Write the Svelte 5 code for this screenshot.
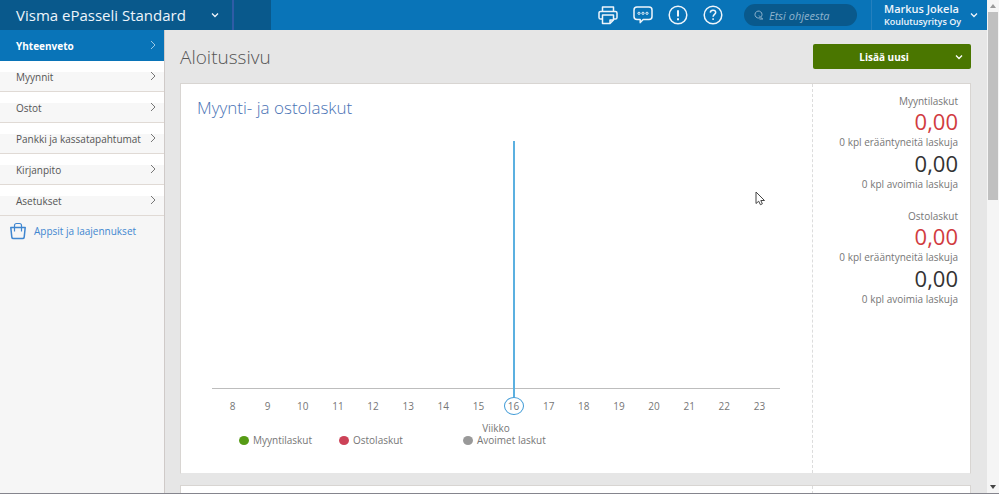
<script>
  let company = $state('Visma ePasseli Standard');
  let search = $state('');

  const menu = ['Yhteenveto', 'Myynnit', 'Ostot', 'Pankki ja kassatapahtumat', 'Kirjanpito', 'Asetukset'];
  let active = $state('Yhteenveto');

  const weeks = Array.from({ length: 16 }, (_, i) => i + 8);
  const currentWeek = 16;

  const legend = [
    { label: 'Myyntilaskut', color: 'green' },
    { label: 'Ostolaskut', color: 'red' },
    { label: 'Avoimet laskut', color: 'grey' }
  ];

  const totals = [
    { title: 'Myyntilaskut', overdue: '0,00', overdueCount: 0, open: '0,00', openCount: 0 },
    { title: 'Ostolaskut', overdue: '0,00', overdueCount: 0, open: '0,00', openCount: 0 }
  ];
</script>

<div class="window">
  <div class="page">
    <header class="topbar">
      <button type="button" class="brand">
        <span>{company}</span>
        <svg class="chevron" viewBox="0 0 8 6"><path d="M1 1.5l3 3 3-3"></path></svg>
      </button>
      <div class="brand-end"></div>
      <div class="tools">
        <button type="button" class="tool" aria-label="Tulosta">
          <svg viewBox="0 0 20 20">
            <path d="M4.5 6.3V2h11v4.3M4.500 14H2.600C1.700 14 1 13.300 1 12.400V8c0-.9.7-1.600 1.600-1.600h14.800c.9 0 1.600.7 1.600 1.600v4.400c0 .9-.7 1.600-1.600 1.600h-1.900"></path>
            <path d="M4.500 10h11v5L12 18.500H4.500zM15.500 15H12v3.500"></path>
          </svg>
        </button>
        <button type="button" class="tool" aria-label="Viestit">
          <svg viewBox="0 0 20 20">
            <path d="M4 2h12c1.700 0 3 1.300 3 3v6.400c0 1.700-1.300 3-3 3h-5.800L7.200 17.600v-3.200H4c-1.700 0-3-1.300-3-3V5c0-1.700 1.300-3 3-3z"></path>
            <g class="thin"><circle cx="6" cy="8.300" r="1.100"></circle><circle cx="10" cy="8.300" r="1.100"></circle><circle cx="14" cy="8.300" r="1.100"></circle></g>
          </svg>
        </button>
        <button type="button" class="tool" aria-label="Ilmoitukset">
          <svg viewBox="0 0 20 20">
            <circle cx="10" cy="10" r="8.800"></circle>
            <path class="thick" d="M10 5.200v6.200M10 13.300v1.900"></path>
          </svg>
        </button>
        <button type="button" class="tool" aria-label="Ohje">
          <svg viewBox="0 0 20 20">
            <circle cx="10" cy="10" r="8.800"></circle>
            <path d="M7.300 7.600c.1-1.500 1.200-2.300 2.700-2.300s2.700.9 2.700 2.200c0 1.900-2.600 2-2.600 4.200M10.100 13.200v1.800"></path>
          </svg>
        </button>
      </div>
      <label class="search">
        <svg viewBox="0 0 10 10"><path d="M6.200 7.600A3.500 3.500 0 1 1 8 4.500c0 1-.4 1.800-1 2.400M5 5.500L8.500 9M5.500 9H9"></path></svg>
        <input type="text" placeholder="Etsi ohjeesta" aria-label="Etsi ohjeesta" bind:value={search} />
      </label>
      <button type="button" class="user">
        <span class="user-text">
          <span class="user-name">Markus Jokela</span>
          <span class="user-company">Koulutusyritys Oy</span>
        </span>
        <svg class="chevron" viewBox="0 0 8 6"><path d="M1 1.500l3 3 3-3"></path></svg>
      </button>
    </header>

    <div class="body">
      <nav class="sidebar">
        {#each menu as item}
          <a href="#{item}" class="nav-item" class:active={item === active} onclick={() => (active = item)}>
            <span>{item}</span>
            <svg viewBox="0 0 6 10"><path d="M1 1l4 4-4 4"></path></svg>
          </a>
        {/each}
        <a href="#apps" class="apps">
          <svg viewBox="0 0 16 18">
            <path d="M.8 5.500h14.400l-1 9.600c-.1.900-.7 1.500-1.600 1.500H3.400c-.9 0-1.500-.6-1.600-1.500z"></path>
            <path class="handle" d="M4.500 9.500V3.500c0-1.200.8-2 2-2h3c1.200 0 2 .8 2 2v6"></path>
          </svg>
          <span>Appsit ja laajennukset</span>
        </a>
      </nav>

      <main class="content">
        <div class="title-row">
          <h1>Aloitussivu</h1>
          <button type="button" class="add">
            <span>Lisää uusi</span>
            <svg class="chevron" viewBox="0 0 8 6"><path d="M1 1.500l3 3 3-3"></path></svg>
          </button>
        </div>

        <section class="card">
          <div class="chart">
            <h2>Myynti- ja ostolaskut</h2>
            <div class="plot">
              {#each weeks as week}
                <div class="slot" class:current={week === currentWeek}></div>
              {/each}
            </div>
            <div class="weeks">
              {#each weeks as week}
                <span class:current={week === currentWeek}>{week}</span>
              {/each}
            </div>
            <div class="axis-title">Viikko</div>
            <ul class="legend">
              {#each legend as entry}
                <li><i class="dot {entry.color}"></i>{entry.label}</li>
              {/each}
            </ul>
          </div>
          <aside class="totals">
            {#each totals as total}
              <div class="total">
                <h3>{total.title}</h3>
                <strong class="overdue">{total.overdue}</strong>
                <p>{total.overdueCount} kpl erääntyneitä laskuja</p>
                <strong>{total.open}</strong>
                <p>{total.openCount} kpl avoimia laskuja</p>
              </div>
            {/each}
          </aside>
          <svg class="pointer" viewBox="0 0 10 15">
            <path d="M1 1v11.500l2.700-2.300 1.700 3.500 2-.9-1.600-3.300H9.500z"></path>
          </svg>
        </section>

        <section class="card">
          <div class="chart"></div>
          <aside class="totals"></aside>
        </section>
      </main>
    </div>
  </div>

  <div class="scrollbar">
    <svg viewBox="0 0 8 4"><path d="M4 0l3 4H1z"></path></svg>
    <div class="thumb"></div>
    <svg class="down" viewBox="0 0 8 4"><path d="M1 0h6L4 4z"></path></svg>
  </div>
</div>

<style>
  :global(body) {
    overflow: hidden;
    font-family: "Open Sans", "Noto Sans", sans-serif;
    font-size: 10px;
    color: #767676;
  }

  svg {
    fill: none;
    stroke: currentColor;
    flex-shrink: 0;
  }

  button {
    font: inherit;
    border: none;
    padding: 0;
    background: none;
    color: inherit;
    cursor: pointer;
  }

  a {
    text-decoration: none;
  }

  h1, h2, h3, p, ul {
    margin: 0;
    padding: 0;
    font-weight: 400;
  }

  .window {
    box-sizing: border-box;
    height: 100vh;
    display: flex;
    overflow: hidden;
    background: #e6e6e6;
    border-bottom: 1px solid #85858d;
  }

  .page {
    flex: 1;
    min-width: 0;
    display: flex;
    flex-direction: column;
  }

  .topbar {
    height: 30px;
    flex-shrink: 0;
    display: flex;
    align-items: stretch;
    background: #0974b8;
    color: #eef5fb;
  }

  .chevron {
    width: 8px;
    height: 6px;
    stroke-width: 1.3;
  }

  .brand {
    box-sizing: border-box;
    width: 234px;
    display: flex;
    align-items: center;
    justify-content: space-between;
    padding: 0 13px 0 16px;
    background: #09598c;
    border-right: 2px solid #2f5ca6;
    font-size: 15px;
    white-space: nowrap;
  }

  .brand-end {
    width: 37px;
    background: #09598c;
  }

  .tools {
    display: flex;
    align-items: center;
    gap: 15px;
    margin-left: auto;
    margin-right: 21px;
  }

  .tool {
    display: flex;
  }

  .tool svg {
    width: 20px;
    height: 20px;
    stroke-width: 1.5;
    stroke-linejoin: round;
  }

  .tool .thin {
    stroke-width: 1;
  }

  .tool .thick {
    stroke-width: 2;
  }

  .search {
    box-sizing: border-box;
    width: 113px;
    height: 22px;
    margin: 4px 14px 0 0;
    padding: 0 10px;
    display: flex;
    align-items: center;
    gap: 5px;
    border-radius: 11px;
    background: #09598c;
    color: #8fb3cd;
  }

  .search svg {
    width: 10px;
    height: 10px;
  }

  .search input {
    flex: 1;
    min-width: 0;
    padding: 0;
    border: none;
    outline: none;
    background: none;
    color: #fff;
    font: italic 11px "Open Sans", sans-serif;
  }

  .search input::placeholder {
    color: #8fb3cd;
    opacity: 1;
  }

  .user {
    box-sizing: border-box;
    width: 116px;
    display: flex;
    align-items: center;
    justify-content: space-between;
    padding: 0 9px 0 12px;
    border-left: 1px solid #2480be;
    text-align: left;
    white-space: nowrap;
  }

  .user-text {
    display: flex;
    flex-direction: column;
    line-height: 13px;
  }

  .user-name {
    font-size: 11px;
    font-weight: 600;
  }

  .user-company {
    font-size: 9px;
    font-weight: 600;
  }

  .body {
    flex: 1;
    min-height: 0;
    display: flex;
  }

  .sidebar {
    width: 164px;
    flex-shrink: 0;
    background: #f6f6f6;
    border-right: 1px solid #cfcac8;
  }

  .nav-item {
    box-sizing: border-box;
    height: 31px;
    display: flex;
    align-items: center;
    justify-content: space-between;
    padding: 2px 8px 0 16px;
    background: linear-gradient(#fff 11px, #f7f7f7 11px);
    border-bottom: 1px solid #e0dad5;
    color: #555;
    white-space: nowrap;
  }

  .nav-item svg {
    width: 6px;
    height: 10px;
    margin-bottom: 2px;
    color: #777;
  }

  .nav-item.active {
    background: #0974b8;
    border-color: #0974b8;
    color: #fff;
    font-weight: 700;
  }

  .nav-item.active svg {
    color: #9cc7e3;
  }

  .apps {
    display: flex;
    align-items: center;
    gap: 8px;
    padding: 6px 10px;
    color: #3f86d0;
  }

  .apps svg {
    width: 16px;
    height: 18px;
    stroke-width: 1.5;
    stroke-linejoin: round;
  }

  .apps .handle {
    stroke-width: 1.2;
  }

  .content {
    flex: 1;
    min-width: 0;
    padding: 0 16px 0 15px;
    overflow: hidden;
  }

  .title-row {
    height: 53px;
    display: flex;
    align-items: center;
    justify-content: space-between;
  }

  h1 {
    font-size: 19px;
    font-weight: 300;
    color: #555;
  }

  .add {
    box-sizing: border-box;
    width: 158px;
    height: 25px;
    display: flex;
    align-items: center;
    padding: 0 8px 0 0;
    border-radius: 2px;
    background: #4a7600;
    color: #fff;
    font-weight: 700;
  }

  .add span {
    flex: 1;
  }

  .card {
    position: relative;
    display: flex;
    min-height: 389px;
    margin-bottom: 11px;
    background: #fff;
    border: 1px solid #d8d5d2;
    border-bottom-color: #e6e6e6;
  }

  .chart {
    flex: 1;
    min-width: 0;
    padding: 12px 32px 0 31px;
  }

  h2 {
    margin-left: -15px;
    font-size: 17px;
    line-height: 24px;
    font-weight: 300;
    color: #4a73b5;
  }

  .plot,
  .weeks {
    display: grid;
    grid-template-columns: repeat(16, 1fr);
    padding: 0 3px;
  }

  .plot {
    height: 247px;
    margin-top: 21px;
    border-bottom: 1px solid #bdbdbd;
  }

  .slot.current {
    position: relative;
  }

  .slot.current::before {
    content: '';
    position: absolute;
    top: 0;
    bottom: -9px;
    left: 50%;
    width: 2px;
    margin-left: -1px;
    background: #5bb0e0;
  }

  .weeks {
    margin-top: 8px;
    justify-items: center;
  }

  .weeks span {
    box-sizing: border-box;
    width: 20px;
    height: 18px;
    line-height: 18px;
    text-align: center;
  }

  .weeks .current {
    line-height: 16px;
    border: 1px solid #3f9ad6;
    border-radius: 50%;
  }

  .axis-title {
    margin-top: 7px;
    line-height: 12px;
    text-align: center;
  }

  .legend {
    display: grid;
    grid-template-columns: 100px 124px auto;
    margin-left: 27px;
    list-style: none;
    line-height: 12px;
  }

  .legend li {
    display: flex;
    align-items: center;
    gap: 4px;
    white-space: nowrap;
  }

  .dot {
    width: 10px;
    height: 9px;
    border-radius: 50%;
  }

  .dot.green { background: #569b15; }
  .dot.red { background: #cc4257; }
  .dot.grey { background: #999; }

  .totals {
    width: 145px;
    padding: 10px 12px 0 0;
    border-left: 1px dashed #dcdcdc;
    text-align: right;
  }

  .total {
    margin-bottom: 18px;
  }

  .total h3,
  .total p {
    font-size: 10px;
    line-height: 14px;
  }

  .total p {
    margin-bottom: 1px;
  }

  .total strong {
    display: block;
    font-size: 22px;
    line-height: 27px;
    font-weight: 400;
    color: #333;
  }

  .total .overdue {
    color: #d13c3f;
  }

  .pointer {
    position: absolute;
    top: 107px;
    right: 205px;
    width: 10px;
    height: 15px;
    fill: #fff;
    color: #444;
  }

  .scrollbar {
    width: 12px;
    display: flex;
    flex-direction: column;
    align-items: center;
    justify-content: space-between;
    background: #f5f5f5;
  }

  .scrollbar svg {
    width: 8px;
    height: 4px;
    margin: 4px 0;
    fill: #999;
    stroke: none;
  }

  .scrollbar .down {
    margin-top: auto;
    fill: #444;
  }

  .thumb {
    width: 10px;
    height: 188px;
    background: #c0c0c0;
  }
</style>
